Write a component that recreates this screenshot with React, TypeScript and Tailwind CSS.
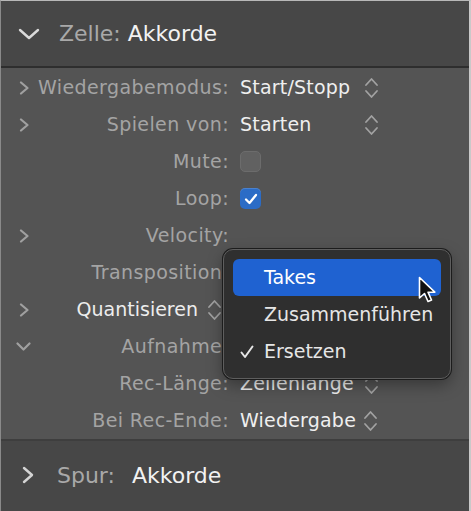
import type { ReactNode } from 'react';

const font = { fontFamily: '"DejaVu Sans", "Liberation Sans", sans-serif' };

function Disclosure({ open = false, big = false }: { open?: boolean; big?: boolean }) {
  if (open) {
    return (
      <svg width="15" height="10" viewBox="0 0 15 10" fill="none">
        <path d="M1.5 1.5 L7.5 7.5 L13.5 1.5" stroke="#a0a0a0" strokeWidth="2.2" strokeLinecap="round" strokeLinejoin="round" />
      </svg>
    );
  }
  return big ? (
    <svg width="12" height="18" viewBox="0 0 12 18" fill="none">
      <path d="M2 2 L10 9 L2 16" stroke="#d4d4d4" strokeWidth="2.4" strokeLinecap="round" strokeLinejoin="round" />
    </svg>
  ) : (
    <svg width="11" height="14" viewBox="0 0 11 14" fill="none">
      <path d="M2 1.5 L8.5 7 L2 12.5" stroke="#a0a0a0" strokeWidth="2.2" strokeLinecap="round" strokeLinejoin="round" />
    </svg>
  );
}

function UpDown() {
  return (
    <svg width="15" height="22" viewBox="0 0 15 22" fill="none">
      <path d="M2 8 L7.5 2 L13 8" stroke="#a2a2a2" strokeWidth="1.8" strokeLinecap="round" strokeLinejoin="round" />
      <path d="M2 14 L7.5 20 L13 14" stroke="#a2a2a2" strokeWidth="1.8" strokeLinecap="round" strokeLinejoin="round" />
    </svg>
  );
}

function Checkbox({ checked }: { checked: boolean }) {
  return checked ? (
    <div className="flex h-[21px] w-[21px] items-center justify-center rounded-[5px] bg-[#2b6cc6] shadow-[inset_0_1px_0_rgba(255,255,255,0.15)]">
      <svg width="14" height="12" viewBox="0 0 14 12" fill="none">
        <path d="M2 6.5 L5.5 10 L12 2" stroke="#ffffff" strokeWidth="2.3" strokeLinecap="round" strokeLinejoin="round" />
      </svg>
    </div>
  ) : (
    <div className="h-[21px] w-[21px] rounded-[5px] border border-[#6c6c6c] bg-[#616161]" />
  );
}

function Row({
  disclosure,
  label,
  children,
  labelWhite = false,
}: {
  disclosure?: 'closed' | 'open';
  label: ReactNode;
  children?: ReactNode;
  labelWhite?: boolean;
}) {
  return (
    <div className="flex h-[37px] items-center">
      <div className="flex w-[38px] items-center pl-[18px]">
        {disclosure === 'closed' && <Disclosure />}
        {disclosure === 'open' && <span className="-ml-[3px] flex"><Disclosure open /></span>}
      </div>
      <div
        className={`flex w-[190px] items-center justify-end whitespace-nowrap text-[19px] ${
          labelWhite ? 'text-[#ededed]' : 'tracking-[0.4px] text-[#a4a4a4]'
        }`}
      >
        {label}
      </div>
      <div className="ml-[11px] flex items-center whitespace-nowrap text-[19px] tracking-[0.2px] text-[#efefef]">{children}</div>
    </div>
  );
}

function Value({ text, width }: { text: string; width: number }) {
  return (
    <div className="flex items-center">
      <span style={{ width }} className="inline-block">
        {text}
      </span>
      <UpDown />
    </div>
  );
}

function Cursor() {
  return (
    <svg width="20" height="29" viewBox="0 0 20 29" className="absolute left-[417px] top-[275px]">
      <path
        d="M1.5 1.5 L1.5 22 L6.5 17.5 L10 25.5 L13.5 24 L10 16.2 L16.8 16.2 Z"
        fill="#111111"
        stroke="#ffffff"
        strokeWidth="1.6"
        strokeLinejoin="round"
      />
    </svg>
  );
}

function Menu() {
  return (
    <div className="absolute left-[222px] top-[248px] h-[130px] w-[228px] rounded-[10px] border border-[#5e5e5e] bg-[#2f2f2f] p-[9px] text-[19px] shadow-[0_0_0_1px_#1c1c1c,0_6px_16px_rgba(0,0,0,0.35)]">
      <div className="flex h-[37px] items-center rounded-[6px] bg-[#1f62d1] pl-[31px] text-white">Takes</div>
      <div className="flex h-[37px] items-center pl-[31px] text-[#e6e6e6]">Zusammenführen</div>
      <div className="flex h-[37px] items-center text-[#e6e6e6]">
        <span className="flex w-[31px] justify-start pl-[7px]">
          <svg width="14" height="14" viewBox="0 0 14 14" fill="none">
            <path d="M1.5 7.5 L5 12 L12.5 1.5" stroke="#e6e6e6" strokeWidth="2" strokeLinecap="round" strokeLinejoin="round" />
          </svg>
        </span>
        Ersetzen
      </div>
    </div>
  );
}

export default function App() {
  return (
    <div
      style={font}
      className="relative flex h-[511px] w-[471px] flex-col overflow-hidden border-l border-r-2 border-t border-l-[#8a8a8a] border-r-[#c9c9c9] border-t-[#b8b8b8] bg-[#474747]"
    >
      <div className="flex h-[65px] items-center bg-[#474747] pl-[17px]">
        <svg width="22" height="12" viewBox="0 0 22 12" fill="none">
          <path d="M2 2 L11 10 L20 2" stroke="#dadada" strokeWidth="2.4" strokeLinecap="round" strokeLinejoin="round" />
        </svg>
        <div className="ml-[19px] text-[22px]">
          <span className="text-[#a9a9a9]">Zelle:</span> <span className="text-[#f2f2f2]">Akkorde</span>
        </div>
      </div>
      <div className="h-[2px] bg-[#2e2e2e]" />
      <div className="flex flex-col bg-[#545454] pt-[1px]">
        <Row disclosure="closed" label="Wiedergabemodus:">
          <Value text="Start/Stopp" width={124} />
        </Row>
        <Row disclosure="closed" label="Spielen von:">
          <Value text="Starten" width={124} />
        </Row>
        <Row label="Mute:">
          <Checkbox checked={false} />
        </Row>
        <Row label="Loop:">
          <Checkbox checked />
        </Row>
        <Row disclosure="closed" label="Velocity:" />
        <Row label="Transposition:" />
        <Row
          disclosure="closed"
          labelWhite
          label={
            <span className="flex items-center pr-[7px]">
              Quantisieren
              <span className="ml-[9px] flex">
                <UpDown />
              </span>
            </span>
          }
        />
        <Row disclosure="open" label="Aufnahme:" />
        <Row label="Rec-Länge:">
          <Value text="Zellenlänge" width={124} />
        </Row>
        <Row label="Bei Rec-Ende:">
          <Value text="Wiedergabe" width={123} />
        </Row>
      </div>
      <div className="h-[2px] bg-[#3e3e3e]" />
      <div className="flex flex-1 items-center bg-[#474747] pb-[2px] pl-[21px]">
        <Disclosure big />
        <div className="ml-[23px] text-[22px]">
          <span className="text-[#a9a9a9]">Spur:</span>
          <span className="ml-[17px] text-[#f2f2f2]">Akkorde</span>
        </div>
      </div>
      <Menu />
      <Cursor />
    </div>
  );
}
